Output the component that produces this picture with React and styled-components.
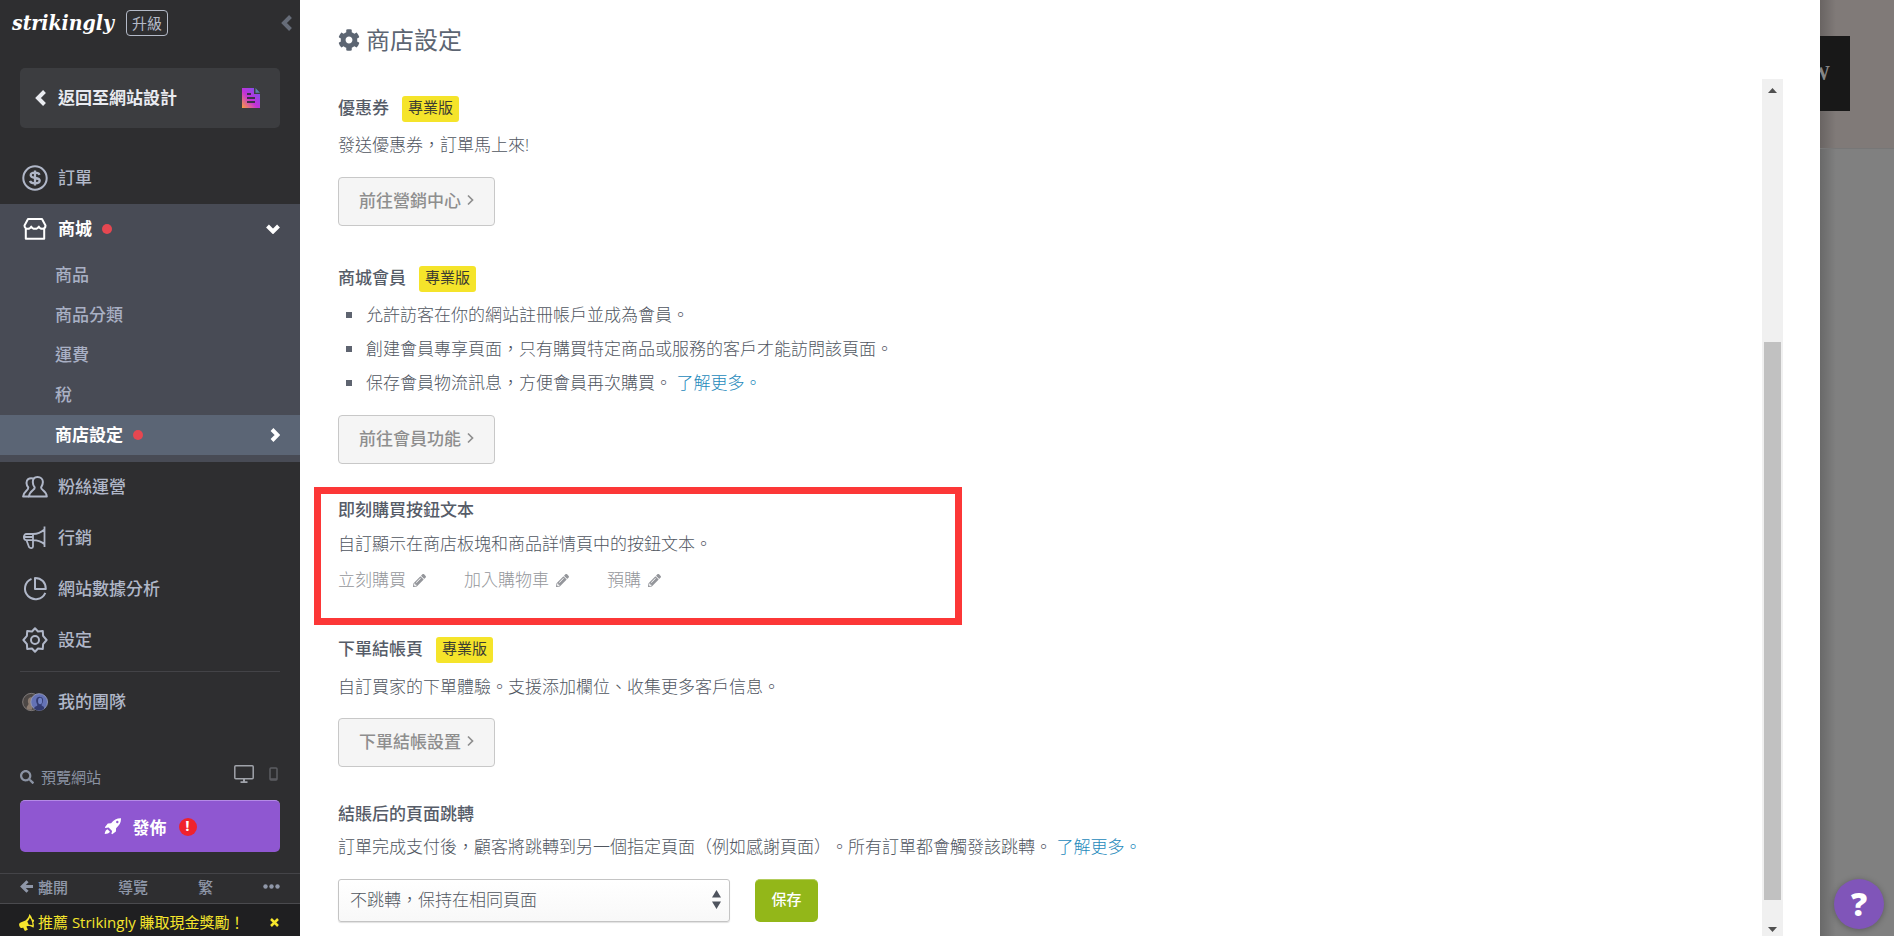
import React from "react";
import styled, { createGlobalStyle } from "styled-components";
import { FaCog, FaSearch, FaPencilAlt } from "react-icons/fa";

const GlobalStyle = createGlobalStyle`
  * {
    box-sizing: border-box;
  }
  body {
    margin: 0;
    font-family: "Open Sans", "Noto Sans CJK TC", sans-serif;
    font-size: 17px;
    color: #50565f;
    text-spacing-trim: space-all;
  }
  a {
    color: inherit;
    text-decoration: none;
  }
  button, select {
    font-family: inherit;
    cursor: pointer;
  }
  h1, h2, p, ul {
    margin: 0;
    padding: 0;
  }
  svg {
    display: block;
    flex: none;
  }
`;

const Page = styled.div`
  display: flex;
  height: 100vh;
  overflow: hidden;
`;

/* sidebar */

const Sidebar = styled.aside`
  display: flex;
  flex-direction: column;
  flex: none;
  width: 300px;
  background: #2e2e30;
  color: #a9b0c0;
  line-height: 24px;
`;

const Brand = styled.header`
  display: flex;
  align-items: center;
  height: 46px;
  padding: 0 8px 0 12px;
`;

const Logo = styled.a`
  font-family: "DejaVu Serif Condensed", "DejaVu Serif", serif;
  font-size: 21px;
  font-weight: 700;
  font-style: italic;

  && {
    color: #fff;
  }
`;

const Upgrade = styled.button`
  height: 26px;
  margin: 0 auto 0 12px;
  padding: 0 5px;
  border: 1px solid #b4bac8;
  border-radius: 4px;
  background: none;
  color: #b4bac8;
  font-size: 15px;
  line-height: 22px;
`;

const IconButton = styled.button`
  display: flex;
  padding: 0;
  border: 0;
  background: none;
  color: ${(p) => p.$color || "inherit"};
`;

const Back = styled.a`
  display: flex;
  align-items: center;
  gap: 12px;
  height: 60px;
  margin: 22px 20px 25px;
  padding: 0 20px 0 15px;
  border-radius: 5px;
  background: #3c3d40;
  font-weight: 700;

  && {
    color: #e9ebf0;
  }
  span {
    flex: 1;
  }
`;

const NavItem = styled.a`
  display: flex;
  align-items: center;
  gap: 10px;
  height: 51px;
  padding: 0 20px 2px 22px;

  && {
    color: ${(p) => (p.$active ? "#fff" : "#b0b7c8")};
    font-weight: ${(p) => (p.$active ? 700 : 500)};
  }
`;

const Group = styled.div`
  padding-bottom: 7px;
  background: #484b55;
`;

const SubItem = styled.a`
  display: flex;
  align-items: center;
  gap: 10px;
  height: 40px;
  padding: 0 20px 0 55px;
  font-weight: ${(p) => (p.$active ? 700 : 500)};
  background: ${(p) => (p.$active ? "#5b6575" : "none")};

  && {
    color: ${(p) => (p.$active ? "#fff" : "#a9b0c4")};
  }
`;

const Dot = styled.i`
  width: 10px;
  height: 10px;
  border-radius: 50%;
  background: #e64751;
`;

const Push = styled.span`
  margin-left: auto;
`;

const Divider = styled.hr`
  width: 260px;
  margin: 5px 20px;
  border: 0;
  border-top: 1px solid #434347;
`;

const Bottom = styled.div`
  margin-top: auto;
  font-size: 15px;
`;

const PreviewRow = styled.div`
  display: flex;
  align-items: center;
  gap: 7px;
  height: 32px;
  margin-bottom: 7px;
  padding: 0 22px 0 20px;
  color: #8b93a3;

  div {
    display: flex;
    align-items: center;
    gap: 15px;
    margin-left: auto;
    padding-bottom: 7px;
  }
`;

const Publish = styled.button`
  display: flex;
  align-items: center;
  justify-content: center;
  gap: 12px;
  width: 260px;
  height: 52px;
  margin: 0 20px 21px;
  border: 0;
  border-top: 1px solid #b48ae6;
  border-radius: 5px;
  background: #8f57d1;
  color: #fff;
  font-size: 17px;
  font-weight: 700;
`;

const Alert = styled.span`
  width: 18px;
  height: 18px;
  border-radius: 50%;
  background: #f0222c;
  font-size: 15px;
  line-height: 15px;
`;

const FootLinks = styled.div`
  display: flex;
  align-items: center;
  justify-content: space-between;
  height: 31px;
  padding: 0 20px 4px;
  border-top: 1px solid #444448;
  border-bottom: 1px solid #4a4a4e;
  color: #8f97a8;
  font-weight: 500;

  a {
    display: flex;
    align-items: center;
    gap: 4px;
  }
`;

const Promo = styled.div`
  display: flex;
  align-items: center;
  gap: 3px;
  height: 32px;
  padding: 4px 21px 0 19px;
  background: #1f1f21;
  color: #f6e62c;

  a {
    flex: 1;
  }
`;

/* settings panel */

const Panel = styled.main`
  display: flex;
  flex-direction: column;
  flex: 1;
  min-width: 0;
  padding: 0 37px 0 38px;
  background: #fff;
`;

const Title = styled.h1`
  display: flex;
  align-items: center;
  gap: 6px;
  height: 79px;
  font-size: 24px;
  font-weight: 400;
  line-height: 36px;
  color: #5c6572;
`;

const ScrollArea = styled.div`
  display: flex;
  flex: 1;
  min-height: 0;
  margin-left: -24px;
`;

const Content = styled.div`
  flex: 1;
  padding: 17px 24px 14px;
  overflow-y: auto;
  scrollbar-width: none;
`;

const Track = styled.div`
  display: flex;
  flex-direction: column;
  align-items: center;
  width: 21px;
  padding: 9px 2px 4px;
  background: #f0f0f0;
  color: #505050;
`;

const Thumb = styled.div`
  flex: 558;
  width: 17px;
  background: #c1c1c1;
`;

const Space = styled.div`
  flex: ${(p) => p.$grow};
`;

const Section = styled.section`
  margin-bottom: ${(p) => p.$after || 0}px;
`;

const Highlight = styled.section`
  max-width: 648px;
  height: 138px;
  margin: 0 0 12px -24px;
  padding: 4px 17px;
  border: 7px solid #fc3737;
`;

const Heading = styled.h2`
  display: flex;
  align-items: flex-start;
  gap: 13px;
  height: 26px;
  font-size: 17px;
  font-weight: 500;
  line-height: 24px;
  color: #565c68;
`;

const Badge = styled.span`
  height: 26px;
  padding: 0 6px;
  border-radius: 3px;
  background: #f5e42a;
  color: #3c3c32;
  font-size: 15px;
  font-weight: 400;
  line-height: 22px;
`;

const Text = styled.p`
  margin-top: ${(p) => p.$gap}px;
  font-weight: 300;
  line-height: 24px;
`;

const More = styled.a`
  && {
    color: #2489bb;
  }
`;

const List = styled.ul`
  margin: 6px 0 15px;
  padding-left: 28px;
  font-weight: 300;
  line-height: 34px;
  list-style: none;

  li::before {
    content: "";
    display: inline-block;
    width: 6px;
    height: 6px;
    margin: 0 14px 3px -20px;
    background: #5e6470;
  }
`;

const GoButton = styled.button`
  display: flex;
  align-items: center;
  justify-content: center;
  gap: 6px;
  min-width: 157px;
  height: 49px;
  margin-top: ${(p) => p.$gap || 0}px;
  padding: 0 19px 4px;
  border: 1px solid #c8c8c8;
  border-radius: 4px;
  background: #f5f5f5;
  color: #8e8e8e;
  font-size: 17px;
  font-weight: 500;
`;

const Edits = styled.div`
  display: flex;
  gap: 38px;
  margin-top: 12px;
`;

const Edit = styled.button`
  display: flex;
  align-items: center;
  gap: 7px;
  padding: 0;
  border: 0;
  background: none;
  color: #94969b;
  font-size: 17px;
  font-weight: 300;
  line-height: 24px;
`;

const Form = styled.form`
  display: flex;
  gap: 25px;
  margin-top: 20px;
`;

const SelectWrap = styled.div`
  position: relative;
  width: 392px;

  svg {
    position: absolute;
    top: 11px;
    right: 9px;
    pointer-events: none;
  }
`;

const Select = styled.select`
  width: 100%;
  height: 43px;
  padding: 0 11px 3px;
  border: 1px solid #c4c4c4;
  border-radius: 3px;
  background: linear-gradient(#fff, #f8f8f8);
  box-shadow: 0 1px 1px rgba(0, 0, 0, 0.12);
  appearance: none;
  color: #50565f;
  font-size: 17px;
  font-weight: 300;
`;

const Save = styled.button`
  width: 63px;
  height: 43px;
  padding: 0 0 5px;
  border: 0;
  border-top: 1px solid #b3cc5c;
  border-radius: 5px;
  background: #93b719;
  color: #fff;
  font-size: 15px;
  font-weight: 500;
`;

/* dimmed site behind the panel */

const Site = styled.div`
  display: flex;
  flex-direction: column;
  flex: none;
  width: 74px;
  background: linear-gradient(90deg, rgba(0, 0, 0, 0.18), transparent 16px), #808080;
`;

const SiteTop = styled.div`
  height: 149px;
  padding-top: 36px;
  border-bottom: 1px solid #777;
  background: linear-gradient(90deg, rgba(0, 0, 0, 0.18), transparent 16px), #807a78;
`;

const SiteBlock = styled.div`
  display: flex;
  justify-content: flex-end;
  width: 30px;
  height: 75px;
  padding-right: 20px;
  overflow: hidden;
  background: #181818;
  color: #858585;
  font: 700 20px/75px "Liberation Serif", serif;
`;

const Help = styled.button`
  width: 50px;
  height: 50px;
  margin: auto 10px 7px 14px;
  padding: 0;
  border: 0;
  border-radius: 50%;
  background: #8055b9;
  box-shadow: 0 1px 6px rgba(0, 0, 0, 0.3);
  color: #fff;
  font-family: "Open Sans", sans-serif;
  font-size: 32px;
  font-weight: 800;
  line-height: 48px;
`;

const paths = {
  left: { box: "0 0 11 16", w: 11, d: "M9.5 1.5 3 8l6.500 6.500", sw: 4 },
  down: { box: "0 0 14 10", w: 14, d: "M1.500 2 7 7.500 12.500 2", sw: 4 },
  right: { box: "0 0 10 14", w: 10, d: "M2 1.500 7.500 7 2 12.500", sw: 4 },
  angle: { box: "0 0 7 12", w: 7, d: "M1 1.500 5.500 6 1 10.500", sw: 1.7 },
};

const Chevron = ({ dir }) => {
  const c = paths[dir];
  return (
    <svg width={c.w} viewBox={c.box} fill="none" stroke="currentColor" strokeWidth={c.sw}>
      <path d={c.d} />
    </svg>
  );
};

const LineIcon = ({ children }) => (
  <svg width="26" height="26" viewBox="0 0 26 26" fill="none" stroke="currentColor" strokeWidth="2" strokeLinejoin="round">
    {children}
  </svg>
);

const OrderIcon = () => (
  <LineIcon>
    <circle cx="13" cy="13" r="11.700" />
    <path d="M17.500 9.800c-.5-1.300-2-2.100-4.500-2.100-2.600 0-4.300.9-4.300 2.600 0 3.900 9 1.500 9 5.300 0 1.800-1.800 2.800-4.700 2.800-2.700 0-4.500-.9-5-2.500M13 5.500v15" strokeWidth="2.300" />
  </LineIcon>
);

const ShopIcon = () => (
  <LineIcon>
    <path d="M6 3h14l3.500 6.500c0 2-1.300 3.300-3.200 3.300-1.700 0-2.900-.8-3.500-2.200-.6 1.400-2 2.200-3.800 2.200s-3.200-.8-3.800-2.200c-.6 1.400-1.800 2.200-3.500 2.200-1.900 0-3.200-1.300-3.200-3.300zM3.800 12.800v10h18.400v-10" />
  </LineIcon>
);

const PeopleIcon = () => (
  <LineIcon>
    <path d="M15.500 3c-3 0-4.700 2-4.700 5 0 2.300.8 4 1.900 5.300.5 3-5.200 3-5.700 9.200h17.800c-.5-6.200-6-6.200-5.700-9.200 1-1.300 1.800-3 1.800-5.300 0-3-2.200-5-5.400-5z" />
    <path d="M11 4.500C7 3.500 4.300 5.800 4.500 9c.1 2 .9 3.500 1.800 4.500.4 3-4.800 3.500-5.200 9H7" />
  </LineIcon>
);

const MegaphoneIcon = () => (
  <LineIcon>
    <path d="M22.500 1.500v20.500M22.500 4.500C18 8.500 14 9 11 9H4.500C1 9 1 15.200 4.500 15.200H11c4 0 7.500.8 11.500 4M11 9v12.500c0 2-3 2-4 .5L4.500 15.200M2 12h9" strokeWidth="1.800" />
  </LineIcon>
);

const PieIcon = () => (
  <LineIcon>
    <path d="M9.500 2.800a10.600 10.600 0 1 0 13.800 14M13 2v11h10.800C23.800 6.500 19.500 2 13 2z" />
  </LineIcon>
);

const GearIcon = () => (
  <LineIcon>
    <path d="M13 1.300 16 4.500l4.800-.5.300 4.900 3.500 4.100-3.500 4.100-.3 4.900-4.800-.5-3 3.200-3-3.200-4.800.5-.3-4.900L1.400 13l3.500-4.100L5.200 4l4.800.5z" />
    <circle cx="13" cy="13" r="4" />
  </LineIcon>
);

const TeamIcon = () => (
  <svg width="26" height="20" viewBox="0 0 28 20">
    <circle cx="10" cy="10" r="9.300" fill="#4c4745" stroke="#85807e" />
    <path d="M5 17c0-3 2-3 2-5-2-5 1-8 4-7v13c-3 1-5 0-6-1z" fill="#8b7b70" />
    <circle cx="18.500" cy="10" r="9" fill="#6472b5" stroke="#9499b5" />
    <path d="M13 17c1-3 4-2 3.500-4-3-6 0-9 3-8.500 4 0 4 5 1.500 8.500 0 2 3 1 3 4-3 3-8 3-11 0z" fill="#333b70" />
    <ellipse cx="19.500" cy="9" rx="2.200" ry="3.500" fill="#7181c4" />
  </svg>
);

const DocIcon = () => (
  <svg width="18" height="20" viewBox="0 0 18 20">
    <defs>
      <linearGradient id="doc" x1="0" y1="1" x2="1" y2="0">
        <stop offset="0" stopColor="#f9a03c" />
        <stop offset=".45" stopColor="#c430d8" />
        <stop offset="1" stopColor="#6a5af0" />
      </linearGradient>
    </defs>
    <path d="M0 0h12v6h6v14H0z" fill="url(#doc)" />
    <path d="M13.500 0 18 4.700h-4.500z" fill="#5b83ad" />
    <path d="M5 6h4M5 10h8M5 14h8" stroke="#3c3049" strokeWidth="2" />
  </svg>
);

const MonitorIcon = () => (
  <svg width="20" height="18" viewBox="0 0 20 18" fill="none" stroke="currentColor" strokeWidth="1.500">
    <rect x=".8" y=".8" width="18.400" height="13" rx="1" />
    <path d="M10 14v3M6.500 17.200h7" strokeWidth="2" />
  </svg>
);

const PhoneIcon = () => (
  <svg width="9" height="14" viewBox="0 0 9 14" fill="none" stroke="#5c5d62" strokeWidth="1.500">
    <rect x="1" y="1" width="7" height="12" rx="1" />
    <path d="M1 12h7" />
  </svg>
);

const RocketIcon = () => (
  <svg width="17" height="17" viewBox="0 0 17 17" fill="currentColor" fillRule="evenodd">
    <path d="M17 .3c.1 4.200-1.400 7-4.900 9.900l-.2 3.300-3.700 2.800-.8-.5.700-2.900-3.500-3.500-3.200.6-.5-.8L3.800 5.500l3.300-.3C10 1.700 12.800.2 17 .3zM13.300 2.800a1.200 1.200 0 1 0 0 2.400 1.200 1.200 0 0 0 0-2.400z" />
    <path d="M3.500 11.200 6 13.700c-1 1.600-2.800 2-5.300 2.300.2-2.400 1-4 2.800-4.800z" />
  </svg>
);

const LeaveIcon = () => (
  <svg width="14" height="13" viewBox="0 0 14 13" fill="none" stroke="currentColor" strokeWidth="3">
    <path d="M7.500 1.200 2.200 6.500l5.300 5.300M2.500 6.500H13" />
  </svg>
);

const HornIcon = () => (
  <svg width="16" height="17" viewBox="0 0 16 17" fill="currentColor">
    <path d="M10.300 0c1.800 1.500 2.500 3.200 3 5.200 1.800-.2 2.500 2.300.9 3 .8 2 .9 3.700.2 5.600-2.200-1.800-4.700-2-7-1.400l1.400 3.400-2.900 1.100-1.800-3.500C2.200 14.500 1.400 14 .6 12.500c-1-2-.5-3.300 1-4L6.500 6.400C8.800 4.800 10 2.700 10.300 0zm.5 3.500c-.5 1.800-1.300 3-2.500 4l1.500 3.300c1.400-.2 2.500 0 3.700.4-.1-3-1-5.500-2.700-7.700z" />
  </svg>
);

const Arrow = ({ up }) => (
  <svg width="9" height="5" viewBox="0 0 9 5" fill="currentColor">
    <path d={up ? "M0 5 4.500 0 9 5z" : "M0 0h9L4.500 5z"} />
  </svg>
);

const subItems = ["商品", "商品分類", "運費", "稅"];

const lowerItems = [
  [PeopleIcon, "粉絲運營"],
  [MegaphoneIcon, "行銷"],
  [PieIcon, "網站數據分析"],
  [GearIcon, "設定"],
];

const Menu = () => (
  <nav>
    <NavItem href="#orders">
      <OrderIcon />
      訂單
    </NavItem>
    <Group>
      <NavItem href="#store" $active>
        <ShopIcon />
        商城
        <Dot />
        <Push>
          <Chevron dir="down" />
        </Push>
      </NavItem>
      {subItems.map((name) => (
        <SubItem href="#sub" key={name}>
          {name}
        </SubItem>
      ))}
      <SubItem href="#settings" $active>
        商店設定
        <Dot />
        <Push>
          <Chevron dir="right" />
        </Push>
      </SubItem>
    </Group>
    {lowerItems.map(([Icon, name]) => (
      <NavItem href="#item" key={name}>
        <Icon />
        {name}
      </NavItem>
    ))}
    <Divider />
    <NavItem href="#team">
      <TeamIcon />
      我的團隊
    </NavItem>
  </nav>
);

const Side = () => (
  <Sidebar>
    <Brand>
      <Logo href="#home">strikingly</Logo>
      <Upgrade>升級</Upgrade>
      <IconButton $color="#666c78" aria-label="收起">
        <Chevron dir="left" />
      </IconButton>
    </Brand>
    <Back href="#editor">
      <Chevron dir="left" />
      <span>返回至網站設計</span>
      <DocIcon />
    </Back>
    <Menu />
    <Bottom>
      <PreviewRow>
        <FaSearch size={14} />
        預覽網站
        <div>
          <IconButton aria-label="電腦" $color="#a0a3aa">
            <MonitorIcon />
          </IconButton>
          <IconButton aria-label="手機">
            <PhoneIcon />
          </IconButton>
        </div>
      </PreviewRow>
      <Publish>
        <RocketIcon />
        發佈
        <Alert>!</Alert>
      </Publish>
      <FootLinks>
        <a href="#leave">
          <LeaveIcon />
          離開
        </a>
        <a href="#tour">導覽</a>
        <a href="#lang">繁</a>
        <IconButton aria-label="更多">
          <svg width="17" height="5" viewBox="0 0 17 5" fill="currentColor">
            <circle cx="2.500" cy="2.500" r="2.200" />
            <circle cx="8.500" cy="2.500" r="2.200" />
            <circle cx="14.500" cy="2.500" r="2.200" />
          </svg>
        </IconButton>
      </FootLinks>
      <Promo>
        <HornIcon />
        <a href="#promo">推薦 Strikingly 賺取現金獎勵！</a>
        <IconButton aria-label="關閉">
          <svg width="9" height="9" viewBox="0 0 9 9" stroke="currentColor" strokeWidth="2.500">
            <path d="m1 1 7 7M8 1 1 8" />
          </svg>
        </IconButton>
      </Promo>
    </Bottom>
  </Sidebar>
);

const Go = ({ children, gap }) => (
  <GoButton $gap={gap}>
    {children}
    <Chevron dir="angle" />
  </GoButton>
);

const Settings = () => (
  <Content>
    <Section $after={40}>
      <Heading>
        優惠券 <Badge>專業版</Badge>
      </Heading>
      <Text $gap={11}>發送優惠券，訂單馬上來!</Text>
      <Go gap={20}>前往營銷中心</Go>
    </Section>
    <Section $after={23}>
      <Heading>
        商城會員 <Badge>專業版</Badge>
      </Heading>
      <List>
        <li>允許訪客在你的網站註冊帳戶並成為會員。</li>
        <li>創建會員專享頁面，只有購買特定商品或服務的客戶才能訪問該頁面。</li>
        <li>
          保存會員物流訊息，方便會員再次購買。 <More href="#members">了解更多。</More>
        </li>
      </List>
      <Go>前往會員功能</Go>
    </Section>
    <Highlight>
      <Heading>即刻購買按鈕文本</Heading>
      <Text $gap={8}>自訂顯示在商店板塊和商品詳情頁中的按鈕文本。</Text>
      <Edits>
        {["立刻購買", "加入購物車", "預購"].map((name) => (
          <Edit key={name}>
            {name}
            <FaPencilAlt size={13} />
          </Edit>
        ))}
      </Edits>
    </Highlight>
    <Section $after={35}>
      <Heading>
        下單結帳頁 <Badge>專業版</Badge>
      </Heading>
      <Text $gap={12}>自訂買家的下單體驗。支援添加欄位、收集更多客戶信息。</Text>
      <Go gap={19}>下單結帳設置</Go>
    </Section>
    <Section>
      <Heading>
        <label htmlFor="redirect">結賬后的頁面跳轉</label>
      </Heading>
      <Text $gap={7}>
        訂單完成支付後，顧客將跳轉到另一個指定頁面（例如感謝頁面）。所有訂單都會觸發該跳轉。{" "}
        <More href="#redirects">了解更多。</More>
      </Text>
      <Form onSubmit={(e) => e.preventDefault()}>
        <SelectWrap>
          <Select id="redirect">
            <option>不跳轉，保持在相同頁面</option>
          </Select>
          <svg width="9" height="19" viewBox="0 0 9 19" fill="#4f545e">
            <path d="M0 7.500 4.500 0 9 7.500zM0 11.500h9L4.500 19z" />
          </svg>
        </SelectWrap>
        <Save>保存</Save>
      </Form>
    </Section>
  </Content>
);

const App = () => {
  return (
    <>
      <GlobalStyle />
      <Page>
        <Side />
        <Panel>
          <Title>
            <FaCog size={22} />
            商店設定
          </Title>
          <ScrollArea>
            <Settings />
            <Track>
              <Arrow up />
              <Space $grow={249} />
              <Thumb />
              <Space $grow={27} />
              <Arrow />
            </Track>
          </ScrollArea>
        </Panel>
        <Site>
          <SiteTop>
            <SiteBlock>W</SiteBlock>
          </SiteTop>
          <Help aria-label="幫助">?</Help>
        </Site>
      </Page>
    </>
  );
};

export default App;
